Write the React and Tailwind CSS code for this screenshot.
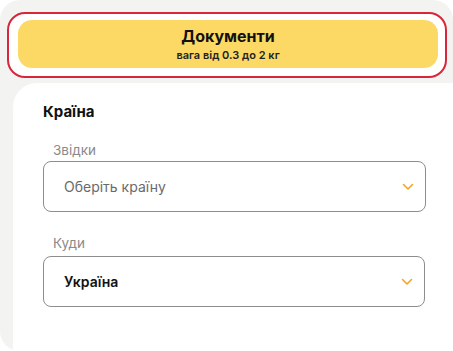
export default function App() {
  const font = { fontFamily: 'Inter, "Noto Sans", sans-serif' };

  const Chevron = () => (
    <svg width="12" height="8" viewBox="0 0 12 8" fill="none">
      <path d="M1.5 1.5 L6 6 L10.5 1.5" stroke="#f5a524" strokeWidth="1.6" strokeLinecap="round" strokeLinejoin="round" />
    </svg>
  );

  return (
    <div className="w-[453px] h-[351px] bg-white overflow-hidden" style={font}>
      <div className="h-[351px] bg-[#f3f3f2] rounded-[20px] pt-[12px]">
        {/* selected parcel type */}
        <div className="ml-[7px] w-[440px] h-[66px] border-[2.5px] border-[#d8263a] rounded-[18px] bg-white pt-[6px] pl-[9px] pr-[7px]">
          <div className="h-[48px] rounded-[14px] bg-[#fcd965] flex flex-col items-center justify-center">
            <div className="text-[16px] leading-[20px] font-bold text-[#111]">Документи</div>
            <div className="text-[11px] leading-[14px] font-semibold text-[#222] mt-[2px]">вага від 0.3 до 2 кг</div>
          </div>
        </div>

        <div className="ml-[13px] mt-[5px] h-[300px] bg-white rounded-tl-[24px] pl-[30px] pt-[19px]">
          <div className="text-[15px] leading-[20px] font-bold text-[#111]">Країна</div>

          <div className="mt-[19px] pl-[10px] text-[13.5px] leading-[18px] text-[#8a8a8a]">Звідки</div>
          <div className="mt-[2px] w-[383px] h-[51px] border border-[#8d8d8d] rounded-[8px] flex items-center justify-between pl-[20px] pr-[11px]">
            <span className="text-[14px] text-[#6a6a6a]">Оберіть країну</span>
            <Chevron />
          </div>

          <div className="mt-[22px] pl-[10px] text-[13.5px] leading-[18px] text-[#8a8a8a]">Куди</div>
          <div className="mt-[4px] w-[382px] h-[51px] border border-[#8d8d8d] rounded-[8px] flex items-center justify-between pl-[20px] pr-[11px]">
            <span className="text-[14px] font-semibold text-[#111]">Україна</span>
            <Chevron />
          </div>
        </div>
      </div>
    </div>
  );
}
